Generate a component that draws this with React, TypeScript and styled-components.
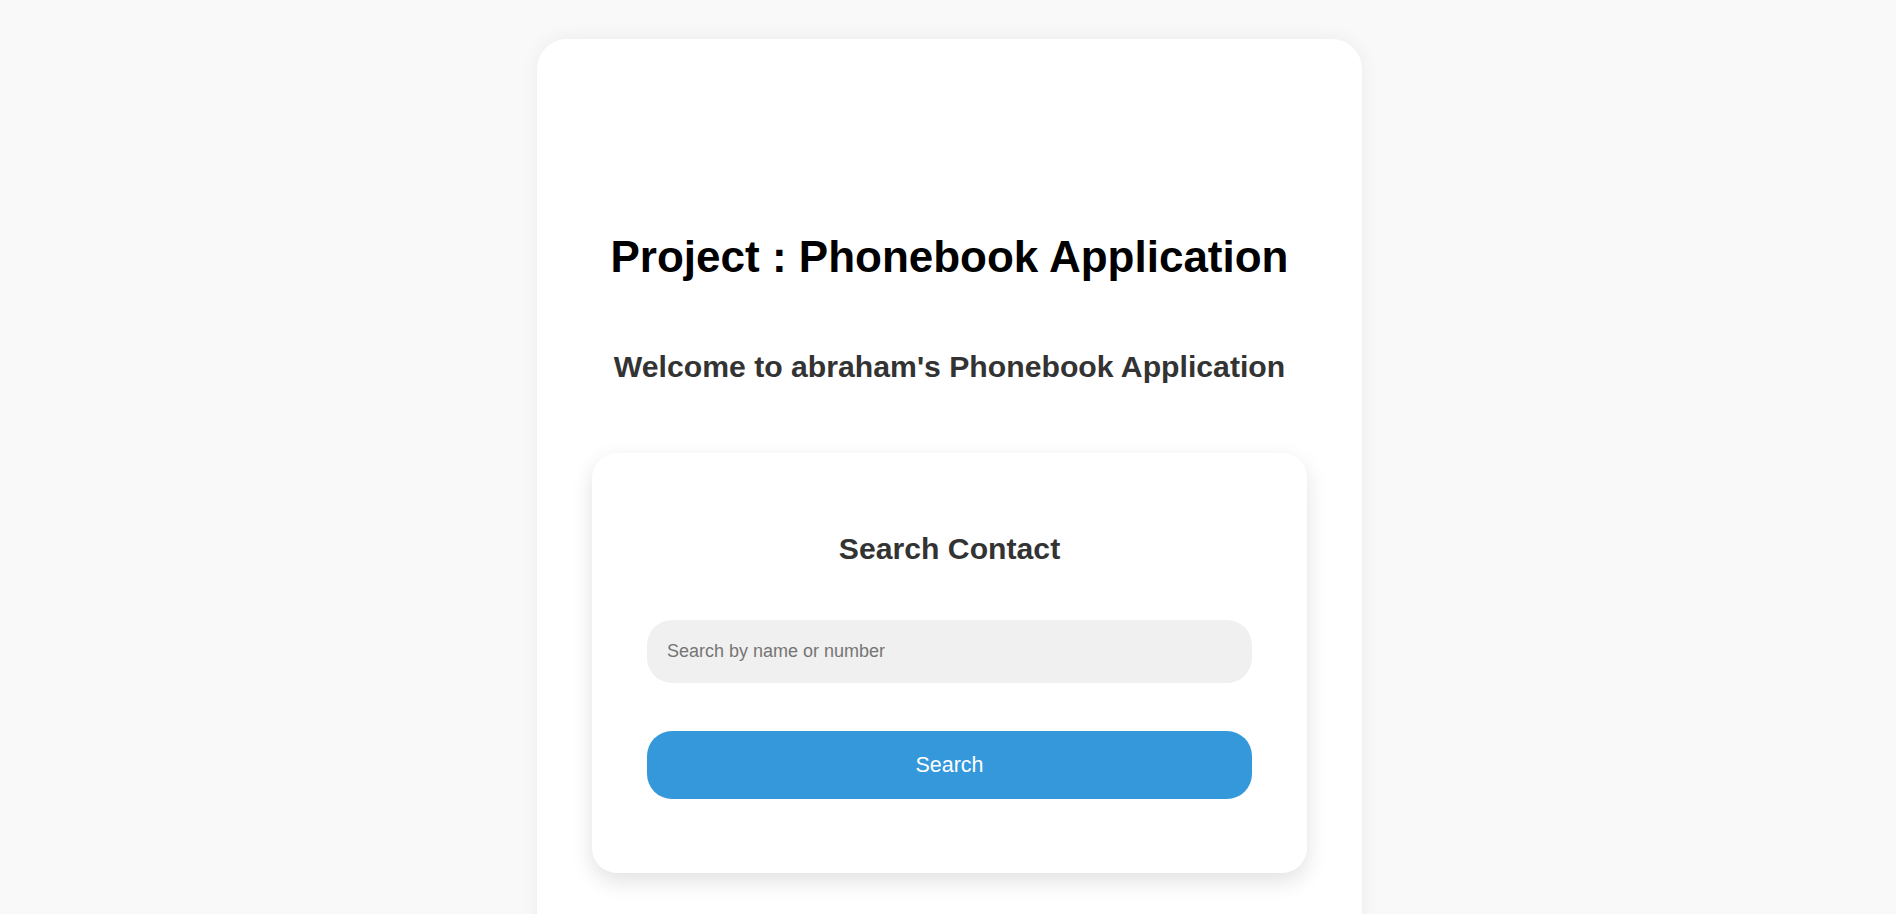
import React from "react";
import styled, { createGlobalStyle } from "styled-components";

const GlobalStyle = createGlobalStyle`
  html, body {
    margin: 0;
    padding: 0;
    background: #f9f9f9;
    font-family: "Liberation Sans", Arial, Helvetica, sans-serif;
  }
  * { box-sizing: border-box; }
`;

const Page = styled.div`
  display: flex;
  justify-content: center;
  padding: 39px 0 0 3px;
  overflow: hidden;
  height: 914px;
`;

const Card = styled.main`
  width: 825px;
  background: #ffffff;
  border-radius: 30px;
  box-shadow: 0 0 20px rgba(0, 0, 0, 0.06);
  padding: 193px 55px 120px;
  display: flex;
  flex-direction: column;
  align-items: stretch;
  text-align: center;
  flex-shrink: 0;
  align-self: flex-start;
`;

const Title = styled.h1`
  margin: 0;
  font-size: 44px;
  font-weight: 700;
  color: #000;
  line-height: normal;
`;

const Subtitle = styled.h2`
  margin: 68px 0 0;
  font-size: 30.2px;
  font-weight: 700;
  color: #333;
  line-height: normal;
`;

const Panel = styled.section`
  margin-top: 69px;
  background: #fff;
  border-radius: 25px;
  box-shadow: 0 8px 22px rgba(0, 0, 0, 0.12);
  padding: 79px 55px 74px;
  display: flex;
  flex-direction: column;
`;

const PanelTitle = styled.h3`
  margin: 0;
  font-size: 30.2px;
  font-weight: 700;
  color: #333;
  line-height: normal;
`;

const SearchInput = styled.input`
  margin-top: 54px;
  height: 63px;
  width: 100%;
  border: none;
  outline: none;
  background: #f0f0f0;
  border-radius: 25px;
  padding: 0 20px;
  font-family: "Liberation Sans", Arial, sans-serif;
  font-size: 18px;
  color: #333;
  &::placeholder {
    color: #757575;
  }
`;

const Button = styled.button`
  margin-top: 48px;
  height: 68px;
  width: 100%;
  border: none;
  border-radius: 25px;
  background: #3498db;
  color: #fff;
  font-family: "Liberation Sans", Arial, sans-serif;
  font-size: 21.5px;
  cursor: pointer;
`;

export default function App() {
  return (
    <>
      <GlobalStyle />
      <Page>
        <Card>
          <Title>Project : Phonebook Application</Title>
          <Subtitle>Welcome to abraham's Phonebook Application</Subtitle>
          <Panel>
            <PanelTitle>Search Contact</PanelTitle>
            <SearchInput type="text" placeholder="Search by name or number" />
            <Button type="button">Search</Button>
          </Panel>
        </Card>
      </Page>
    </>
  );
}
